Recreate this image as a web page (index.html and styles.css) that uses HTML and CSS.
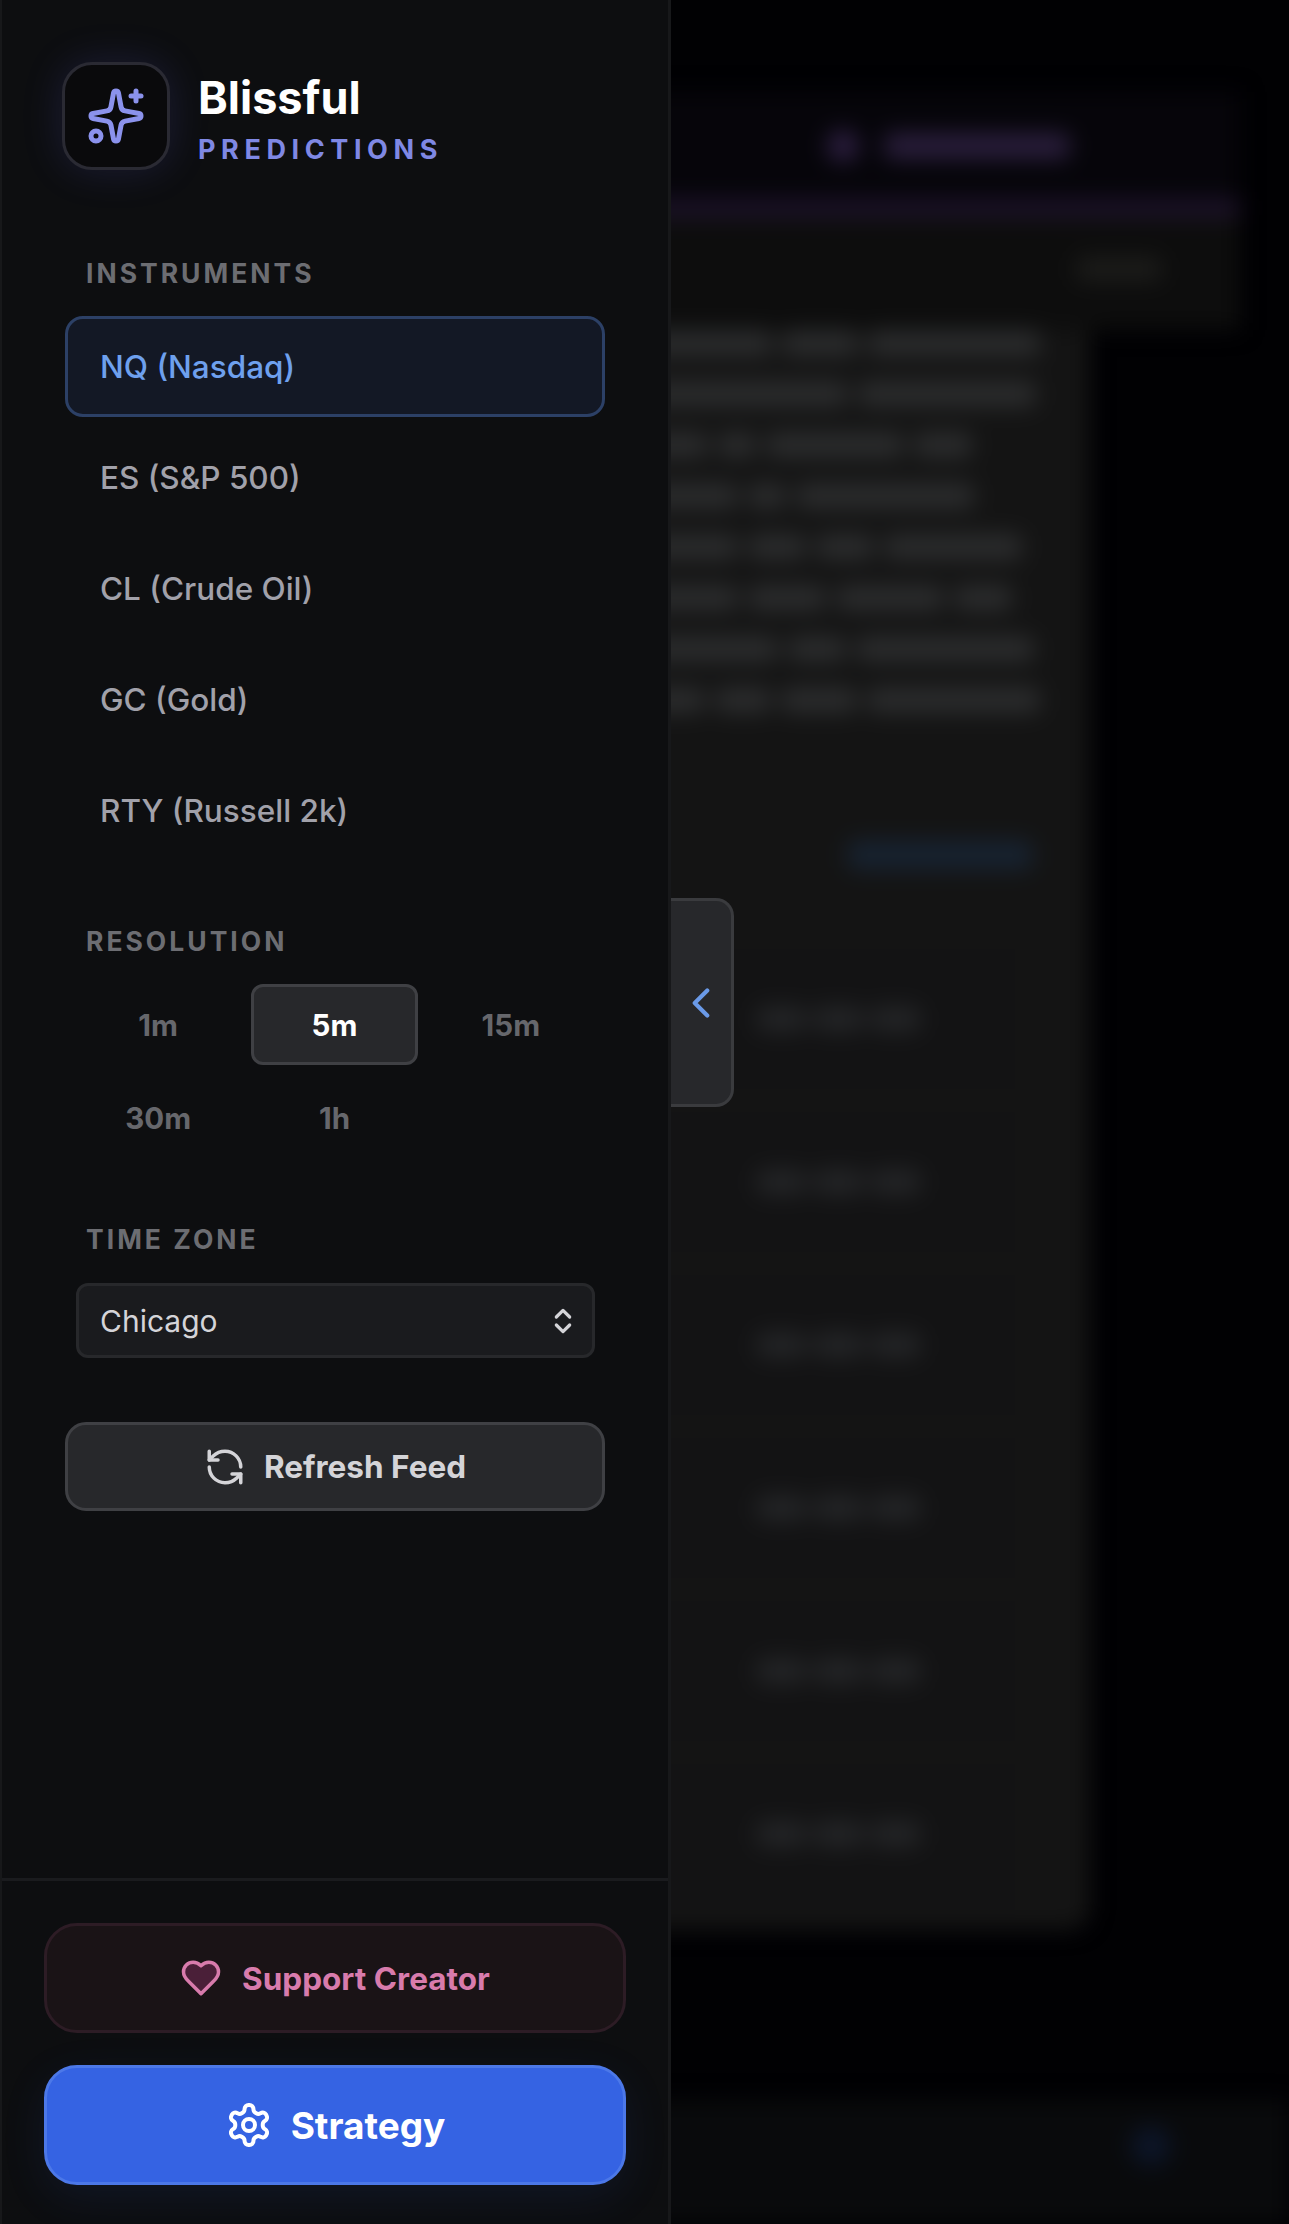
FILE: index.html
```html
<!DOCTYPE html>
<html lang="en">

<head>
    <meta charset="UTF-8">
    <meta name="viewport" content="width=device-width, initial-scale=1.0">
    <title>Blissful Predictions</title>
    <link rel="stylesheet" href="styles.css">
</head>

<body>
    <!-- page behind the open drawer, blurred -->
    <main class="backdrop" aria-hidden="true">
        <div class="topbar"><span class="dot-purple"></span><span class="title-blob"></span></div>
        <div class="accent"></div>
        <div class="toolbar"><span class="toolbar-blob"></span></div>
        <div class="card">
            <div class="lines">
                <div class="line"><span class="word-170"></span><span class="word-70"></span><span class="word-170"></span></div>
                <div class="line"><span class="word-240"></span><span class="word-170"></span></div>
                <div class="line"><span class="word-100"></span><span class="word-30"></span><span class="word-130"></span><span class="word-50"></span></div>
                <div class="line"><span class="word-130"></span><span class="word-30"></span><span class="word-170"></span></div>
                <div class="line"><span class="word-130"></span><span class="word-50"></span><span class="word-50"></span><span class="word-130"></span></div>
                <div class="line"><span class="word-130"></span><span class="word-70"></span><span class="word-100"></span><span class="word-50"></span></div>
                <div class="line"><span class="word-170"></span><span class="word-50"></span><span class="word-170"></span></div>
                <div class="line"><span class="word-100"></span><span class="word-50"></span><span class="word-70"></span><span class="word-170"></span></div>
            </div>
            <div class="toggle-row"><span class="toggle-blob"></span></div>
            <div class="rows">
                <div class="row"><span class="row-word"></span><span class="row-word"></span><span class="row-word"></span></div>
                <div class="row"><span class="row-word"></span><span class="row-word"></span><span class="row-word"></span></div>
                <div class="row"><span class="row-word"></span><span class="row-word"></span><span class="row-word"></span></div>
                <div class="row"><span class="row-word"></span><span class="row-word"></span><span class="row-word"></span></div>
                <div class="row"><span class="row-word"></span><span class="row-word"></span><span class="row-word"></span></div>
                <div class="row"><span class="row-word"></span><span class="row-word"></span><span class="row-word"></span></div>
            </div>
        </div>
        <div class="bottombar"><span class="dot-blue"></span></div>
    </main>

    <aside class="sidebar">
        <header class="brand">
            <div class="logo">
                <svg class="logo-icon" viewBox="0 0 24 24" fill="none" stroke="currentColor" stroke-width="2" stroke-linecap="round" stroke-linejoin="round">
                    <path d="M11.017 2.814a1 1 0 0 1 1.966 0l1.051 5.558a2 2 0 0 0 1.594 1.594l5.558 1.051a1 1 0 0 1 0 1.966l-5.558 1.051a2 2 0 0 0-1.594 1.594l-1.051 5.558a1 1 0 0 1-1.966 0l-1.051-5.558a2 2 0 0 0-1.594-1.594l-5.558-1.051a1 1 0 0 1 0-1.966l5.558-1.051a2 2 0 0 0 1.594-1.594z" />
                    <path d="M20 2v4" />
                    <path d="M22 4h-4" />
                    <circle cx="4" cy="20" r="2" />
                </svg>
            </div>
            <div class="brand-text">
                <h1>Blissful</h1>
                <p>PREDICTIONS</p>
            </div>
        </header>

        <div class="controls">
            <h2 class="label">INSTRUMENTS</h2>
            <ul class="instruments">
                <li class="active">NQ (Nasdaq)</li>
                <li>ES (S&amp;P 500)</li>
                <li>CL (Crude Oil)</li>
                <li>GC (Gold)</li>
                <li>RTY (Russell 2k)</li>
            </ul>

            <h2 class="label resolution-label">RESOLUTION</h2>
            <div class="resolutions">
                <button type="button">1m</button>
                <button type="button" class="active">5m</button>
                <button type="button">15m</button>
                <button type="button">30m</button>
                <button type="button">1h</button>
            </div>

            <h2 class="label zone-label">TIME ZONE</h2>
            <div class="select">
                <span>Chicago</span>
                <svg class="select-icon" viewBox="0 0 24 24" fill="none" stroke="currentColor" stroke-width="2.4" stroke-linecap="round" stroke-linejoin="round">
                    <path d="m7 15 5 5 5-5" />
                    <path d="m7 9 5-5 5 5" />
                </svg>
            </div>

            <button type="button" class="refresh">
                <svg class="refresh-icon" viewBox="0 0 24 24" fill="none" stroke="currentColor" stroke-width="2" stroke-linecap="round" stroke-linejoin="round">
                    <path d="M21 12a9 9 0 0 0-9-9 9.75 9.75 0 0 0-6.74 2.74L3 8" />
                    <path d="M3 3v5h5" />
                    <path d="M3 12a9 9 0 0 0 9 9 9.75 9.75 0 0 0 6.74-2.74L21 16" />
                    <path d="M16 16h5v5" />
                </svg>
                Refresh Feed
            </button>
        </div>

        <footer class="sidebar-footer">
            <button type="button" class="support">
                <svg class="heart-icon" viewBox="0 0 24 24" stroke="currentColor" stroke-width="2" stroke-linecap="round" stroke-linejoin="round">
                    <path d="M19 14c1.49-1.46 3-3.21 3-5.5A5.5 5.5 0 0 0 16.5 3c-1.76 0-3 .5-4.5 2-1.5-1.5-2.74-2-4.5-2A5.5 5.5 0 0 0 2 8.5c0 2.3 1.5 4.05 3 5.5l7 7Z" />
                </svg>
                Support Creator
            </button>
            <button type="button" class="strategy">
                <svg class="gear-icon" viewBox="0 0 24 24" fill="none" stroke="currentColor" stroke-width="2" stroke-linecap="round" stroke-linejoin="round">
                    <path d="M12.22 2h-.44a2 2 0 0 0-2 2v.18a2 2 0 0 1-1 1.73l-.43.25a2 2 0 0 1-2 0l-.15-.08a2 2 0 0 0-2.73.73l-.22.38a2 2 0 0 0 .73 2.73l.15.1a2 2 0 0 1 1 1.72v.51a2 2 0 0 1-1 1.74l-.15.09a2 2 0 0 0-.73 2.73l.22.38a2 2 0 0 0 2.73.73l.15-.08a2 2 0 0 1 2 0l.43.25a2 2 0 0 1 1 1.73V20a2 2 0 0 0 2 2h.44a2 2 0 0 0 2-2v-.18a2 2 0 0 1 1-1.73l.43-.25a2 2 0 0 1 2 0l.15.08a2 2 0 0 0 2.73-.73l.22-.39a2 2 0 0 0-.73-2.73l-.15-.08a2 2 0 0 1-1-1.74v-.5a2 2 0 0 1 1-1.74l.15-.09a2 2 0 0 0 .73-2.73l-.22-.38a2 2 0 0 0-2.73-.73l-.15.08a2 2 0 0 1-2 0l-.43-.25a2 2 0 0 1-1-1.73V4a2 2 0 0 0-2-2z" />
                    <circle cx="12" cy="12" r="3" />
                </svg>
                Strategy
            </button>
        </footer>

        <button type="button" class="collapse" aria-label="Collapse">
            <svg class="chevron-icon" viewBox="0 0 24 24" fill="none" stroke="currentColor" stroke-width="2" stroke-linecap="round" stroke-linejoin="round">
                <path d="m15 18-6-6 6-6" />
            </svg>
        </button>
    </aside>
</body>

</html>
```

FILE: styles.css
```css
* {
    margin: 0;
    padding: 0;
    box-sizing: border-box;
}

html,
body {
    height: 100%;
}

body {
    position: relative;
    overflow: hidden;
    background: #010103;
    font-family: 'Inter', 'Noto Sans', sans-serif;
}

button {
    font-family: inherit;
    border: none;
    background: none;
}

/* blurred page behind the drawer */
.backdrop {
    height: 100%;
    padding-top: 92px;
    display: flex;
    flex-direction: column;
    filter: blur(11px);
}

.topbar {
    height: 107px;
    margin-right: 49px;
    padding-left: 827px;
    display: flex;
    align-items: center;
    gap: 25px;
    background: #06050a;
}

.dot-purple {
    width: 32px;
    height: 32px;
    border-radius: 50%;
    background: #2c1e40;
}

.title-blob {
    width: 186px;
    height: 26px;
    border-radius: 8px;
    background: #2a1e3c;
}

.accent {
    height: 18px;
    margin-right: 49px;
    background: #1d122a;
}

.toolbar {
    height: 113px;
    margin-right: 49px;
    padding: 0 0 10px 1076px;
    display: flex;
    align-items: center;
    background: #0d0d0d;
}

.toolbar-blob {
    width: 86px;
    height: 24px;
    border-radius: 8px;
    background: #1c1c1a;
}

.card {
    width: 1090px;
    height: 1600px;
    padding: 0 50px 0 600px;
    border-radius: 0 0 22px 0;
    background: #141414;
}

.lines {
    display: flex;
    flex-direction: column;
    gap: 25px;
}

.line {
    height: 26px;
    display: flex;
    gap: 10px;
}

.line span {
    border-radius: 8px;
    background: #2b2c2d;
}

.word-30 { width: 38px; }
.word-50 { width: 58px; }
.word-70 { width: 78px; }
.word-100 { width: 108px; }
.word-130 { width: 138px; }
.word-170 { width: 178px; }
.word-240 { width: 248px; }

.toggle-row {
    margin-top: 127px;
    padding-left: 247px;
}

.toggle-blob {
    display: block;
    width: 186px;
    height: 30px;
    border-radius: 10px;
    background: #172230;
}

.rows {
    margin-top: 79px;
    display: flex;
    flex-direction: column;
    gap: 23px;
}

.row {
    height: 140px;
    margin-right: 25px;
    padding-left: 156px;
    display: flex;
    align-items: center;
    gap: 6px;
    background: #131314;
}

.row-word {
    width: 51px;
    height: 26px;
    border-radius: 10px;
    background: #232426;
}

.bottombar {
    margin-top: 170px;
    flex: 1;
    display: flex;
    justify-content: flex-end;
    padding: 26px 118px 0 0;
    background: #090a0c;
}

.dot-blue {
    width: 40px;
    height: 40px;
    border-radius: 50%;
    background: #0c1528;
}

/* drawer */
.sidebar {
    position: absolute;
    top: 0;
    left: 0;
    width: 671px;
    height: 100%;
    display: flex;
    flex-direction: column;
    background: #0d0e10;
    border-left: 2px solid #17181a;
    border-right: 3px solid #17181a;
}

.brand {
    padding: 62px 0 0 60px;
    display: flex;
    align-items: center;
    gap: 28px;
}

.logo {
    width: 108px;
    height: 108px;
    display: flex;
    align-items: center;
    justify-content: center;
    border-radius: 30px;
    background: #0a0a0c;
    border: 3px solid #2a2a33;
    box-shadow: 0 0 42px rgba(99, 102, 241, 0.16);
    color: #8b92ec;
}

.logo-icon {
    width: 60px;
    height: 60px;
}

.brand-text {
    padding-top: 4px;
}

.brand-text h1 {
    font-size: 45px;
    line-height: 54px;
    font-weight: 700;
    color: #ffffff;
}

.brand-text p {
    margin-top: 10px;
    font-size: 27px;
    line-height: 30px;
    font-weight: 700;
    letter-spacing: 5.6px;
    color: #7f88e4;
}

.controls {
    padding: 88px 63px 0;
}

.label {
    padding-left: 21px;
    font-size: 26.5px;
    line-height: 31px;
    font-weight: 700;
    letter-spacing: 3px;
    color: #6c6d72;
}

.instruments {
    margin-top: 27px;
    list-style: none;
    display: flex;
    flex-direction: column;
    gap: 10px;
}

.instruments li {
    height: 101px;
    padding-left: 32px;
    display: flex;
    align-items: center;
    border: 3px solid transparent;
    border-radius: 18px;
    font-size: 31.5px;
    font-weight: 500;
    color: #a1a1aa;
}

.instruments li.active {
    background: #131825;
    border-color: #2c4066;
    color: #6ea0ee;
}

.resolution-label {
    margin-top: 65px;
}

.resolutions {
    margin: 27px 11px 0 10px;
    display: grid;
    grid-template-columns: repeat(3, 1fr);
    gap: 12px 10px;
}

.resolutions button {
    height: 81px;
    border: 3px solid transparent;
    border-radius: 12px;
    font-size: 29.5px;
    font-weight: 700;
    color: #66676c;
}

.resolutions button.active {
    background: #27282b;
    border-color: #3f4044;
    color: #ffffff;
}

.zone-label {
    margin-top: 66px;
}

.select {
    height: 75px;
    margin: 28px 10px 0 11px;
    padding: 0 13px 0 21px;
    display: flex;
    align-items: center;
    justify-content: space-between;
    background: #1a1b1e;
    border: 3px solid #27282b;
    border-radius: 12px;
    font-size: 30px;
    color: #d4d4d8;
}

.select-icon {
    width: 32px;
    height: 32px;
}

.refresh {
    width: 100%;
    height: 89px;
    margin-top: 64px;
    display: flex;
    align-items: center;
    justify-content: center;
    gap: 18px;
    background: #27282b;
    border: 3px solid #3f4044;
    border-radius: 21px;
    font-size: 31.5px;
    font-weight: 700;
    color: #d4d4d8;
}

.refresh-icon {
    width: 42px;
    height: 42px;
}

.sidebar-footer {
    margin-top: auto;
    padding: 42px 42px 39px;
    display: flex;
    flex-direction: column;
    gap: 32px;
    border-top: 3px solid #1a1b1e;
}

.support {
    height: 110px;
    display: flex;
    align-items: center;
    justify-content: center;
    gap: 20px;
    background: #1a1316;
    border: 3px solid #2d1c25;
    border-radius: 33px;
    font-size: 31.5px;
    font-weight: 700;
    color: #d87bac;
}

.heart-icon {
    width: 42px;
    height: 42px;
    fill: #4a1f38;
}

.strategy {
    height: 120px;
    display: flex;
    align-items: center;
    justify-content: center;
    gap: 18px;
    background: #3563e3;
    border: 3px solid #4c78e8;
    border-radius: 33px;
    box-shadow: 0 12px 45px rgba(53, 99, 227, 0.1);
    font-size: 37px;
    font-weight: 700;
    color: #ffffff;
}

.gear-icon {
    width: 48px;
    height: 48px;
}

.collapse {
    position: absolute;
    top: 898px;
    left: 669px;
    width: 63px;
    height: 209px;
    display: flex;
    align-items: center;
    justify-content: center;
    background: #27282b;
    border: 3px solid #3a3b3e;
    border-left: none;
    border-radius: 0 18px 18px 0;
    color: #6a9ae8;
}

.chevron-icon {
    width: 50px;
    height: 50px;
    flex-shrink: 0;
}
```
